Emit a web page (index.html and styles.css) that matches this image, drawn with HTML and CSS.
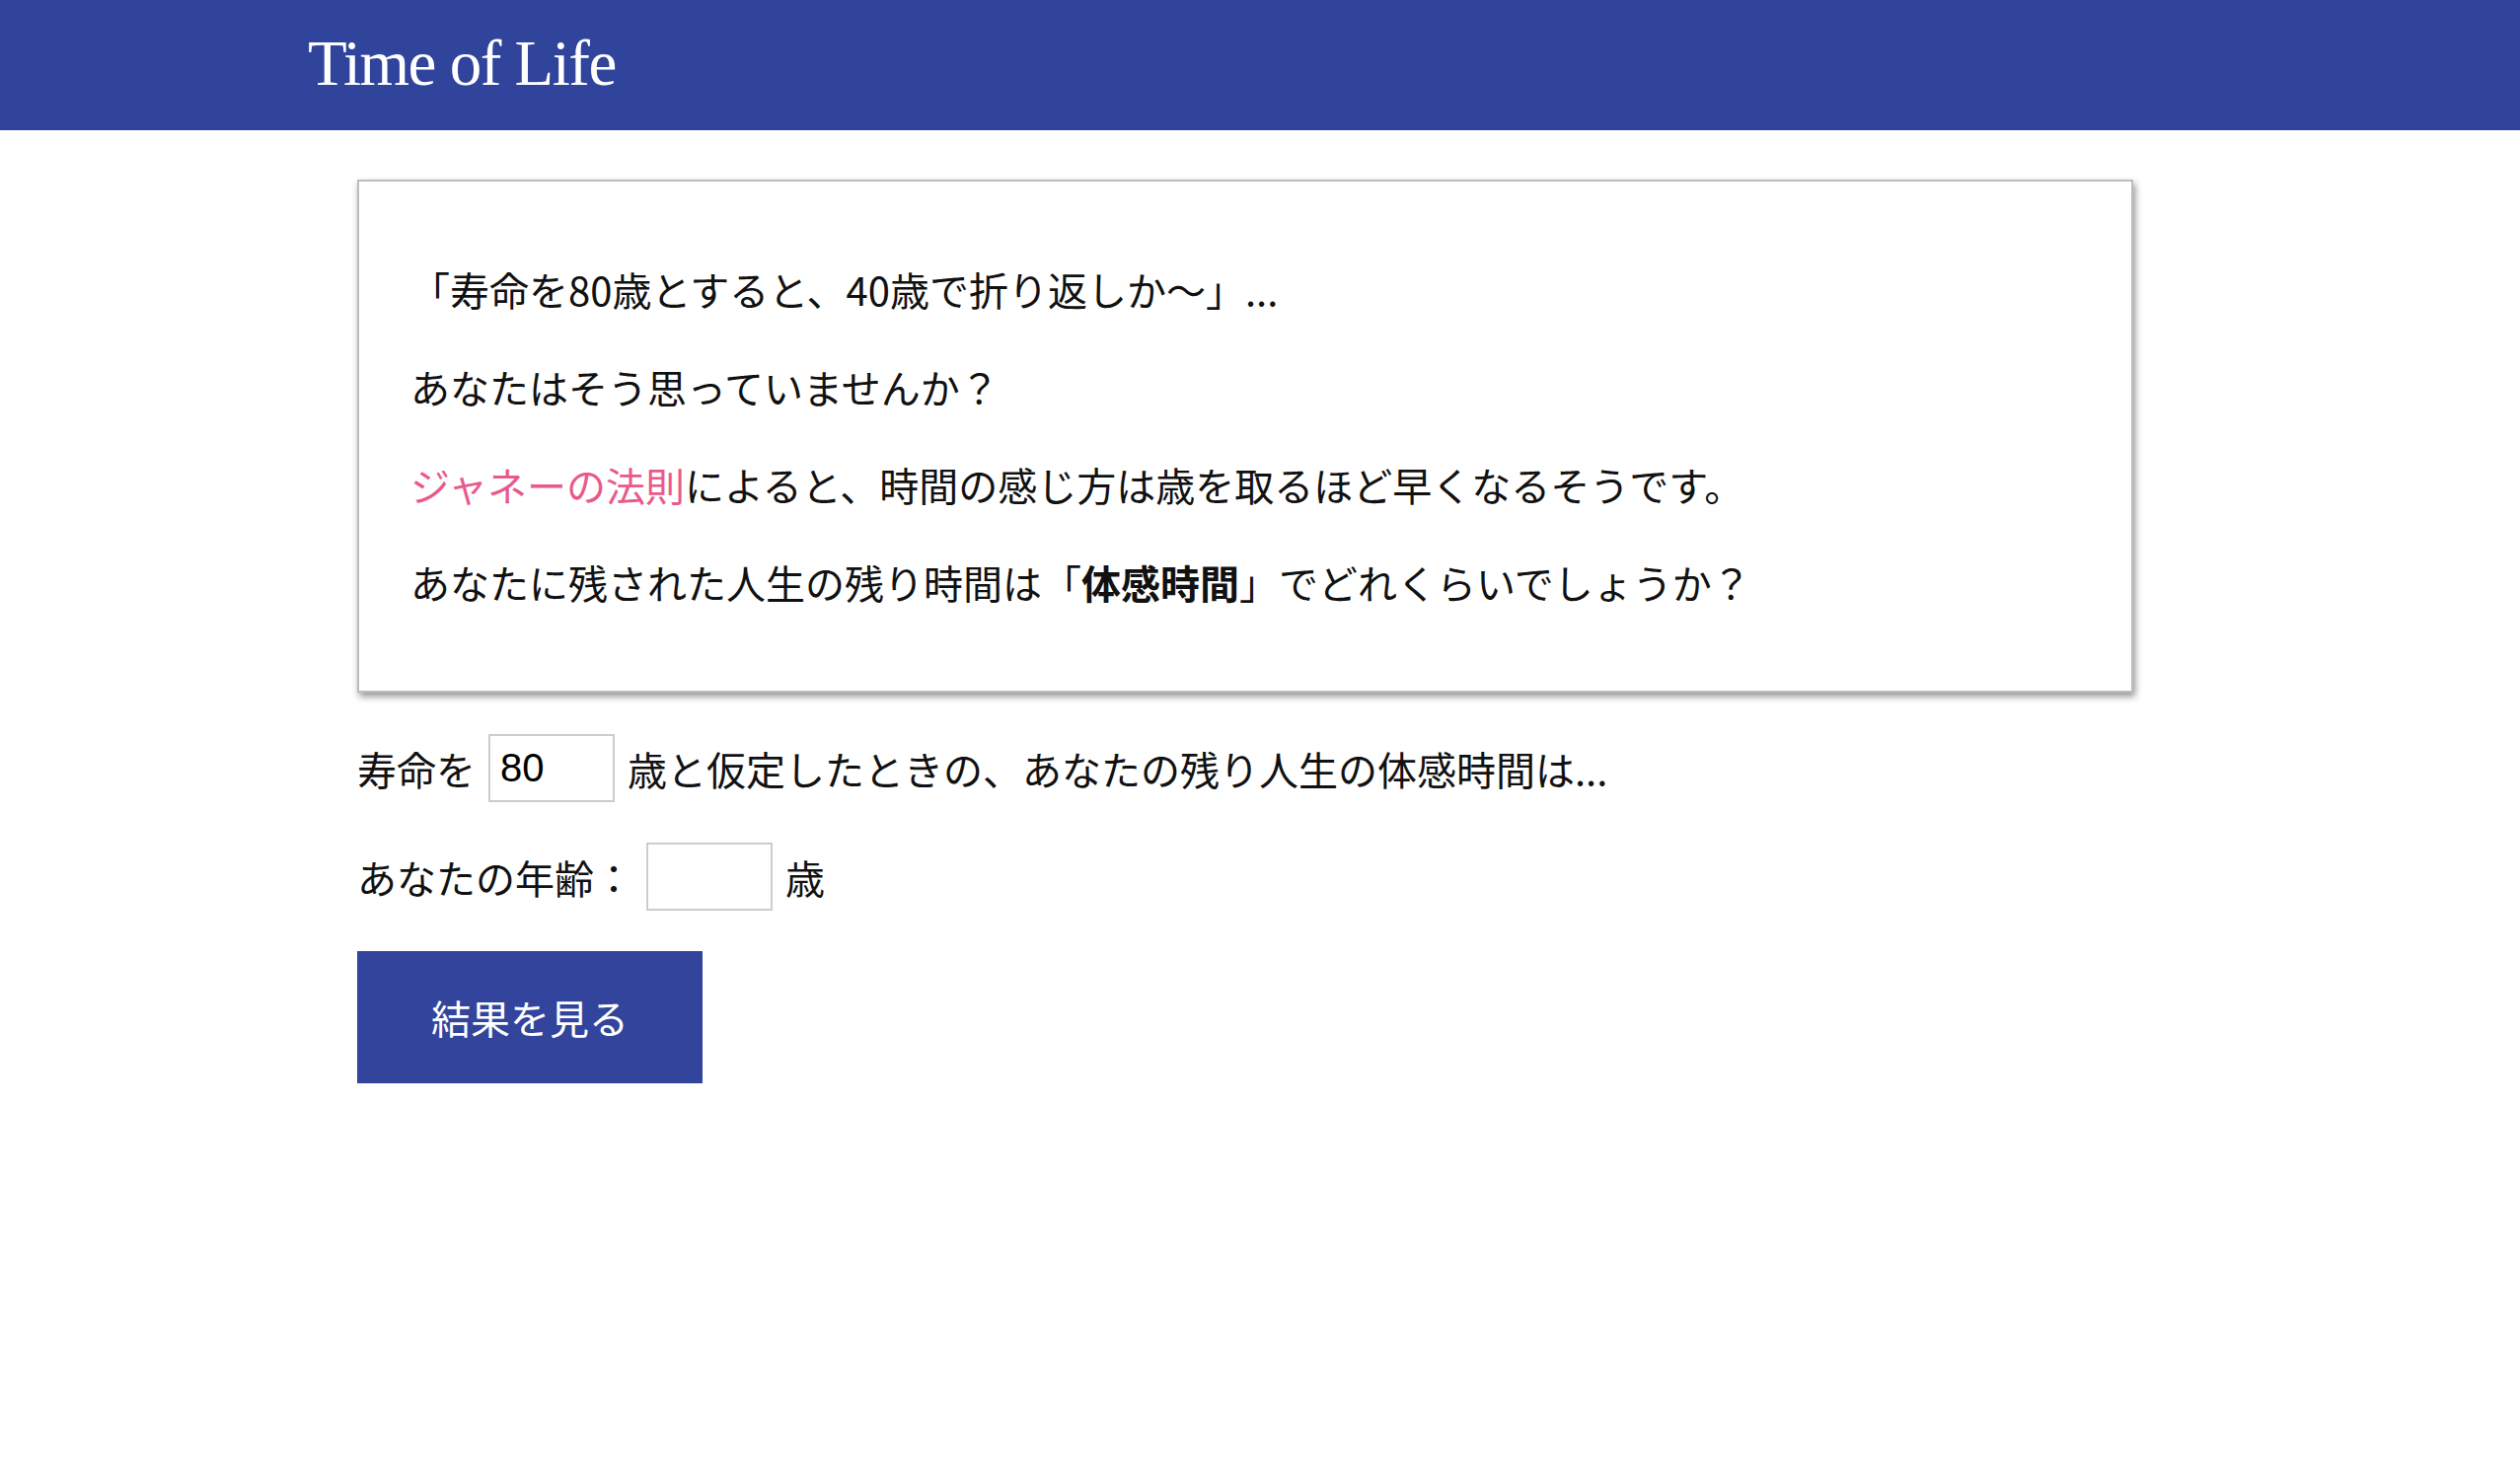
FILE: index.html
```html
<!DOCTYPE html>
<html lang="ja">
<head>
<meta charset="utf-8">
<title>Time of Life</title>
<link rel="stylesheet" href="styles.css">
</head>
<body>
<header class="site-header">
  <h1 class="site-title">Time of Life</h1>
</header>
<main class="main">
  <section class="intro-card">
    <p>「寿命を80歳とすると、40歳で折り返しか〜」...</p>
    <p>あなたはそう思っていませんか？</p>
    <p><span class="accent">ジャネーの法則</span>によると、時間の感じ方は歳を取るほど早くなるそうです。</p>
    <p>あなたに残された人生の残り時間は「<strong>体感時間</strong>」でどれくらいでしょうか？</p>
  </section>
  <form class="calc-form">
    <div class="form-row">
      <span>寿命を</span>
      <input class="num-input" type="text" value="80">
      <span>歳と仮定したときの、あなたの残り人生の体感時間は...</span>
    </div>
    <div class="form-row">
      <span>あなたの年齢：</span>
      <input class="num-input" type="text" value="">
      <span>歳</span>
    </div>
    <div class="button-row">
      <button class="submit-btn" type="button">結果を見る</button>
    </div>
  </form>
</main>
</body>
</html>
```
FILE: styles.css
```css
html, body {
  margin: 0;
  padding: 0;
  background: #ffffff;
}
body {
  font-family: "Noto Sans CJK JP", "Noto Sans", sans-serif;
  color: #111111;
  font-size: 40px;
}
.site-header {
  background: #31449b;
  height: 132px;
  display: flex;
  align-items: center;
  padding-left: 312px;
}
.site-title {
  margin: 0;
  font-family: "Liberation Serif", "DejaVu Serif", serif;
  font-weight: normal;
  font-size: 65px;
  line-height: 1;
  color: #ffffff;
  letter-spacing: -1.5px;
  transform: translateY(-2px);
}
.main {
  padding: 50px 0 0 362px;
}
.intro-card {
  width: 1800px;
  box-sizing: border-box;
  border: 2px solid #bdbdbd;
  box-shadow: 2px 4px 7px rgba(0, 0, 0, 0.42);
  padding: 40px 52px 41px;
  background: #ffffff;
}
.intro-card p {
  margin: 39px 0;
  line-height: 60px;
  font-size: 40px;
}
.intro-card strong {
  font-weight: bold;
}
.accent {
  color: #e95a8c;
}
.calc-form {
  margin-top: 42px;
  display: flex;
  flex-direction: column;
  gap: 41px;
}
.form-row {
  display: flex;
  align-items: center;
  gap: 13px;
  height: 69px;
  line-height: 1;
}
.num-input {
  width: 128px;
  height: 69px;
  box-sizing: border-box;
  border: 2px solid #cccccc;
  padding: 0 10px;
  font-family: "Liberation Sans", "Noto Sans CJK JP", sans-serif;
  font-size: 40px;
  color: #000000;
  background: #ffffff;
  outline: none;
}
.button-row {
  display: flex;
}
.submit-btn {
  width: 350px;
  height: 134px;
  border: none;
  background: #32449b;
  color: #ffffff;
  font-family: "Noto Sans CJK JP", sans-serif;
  font-size: 40px;
  padding: 0;
  cursor: pointer;
}
```
